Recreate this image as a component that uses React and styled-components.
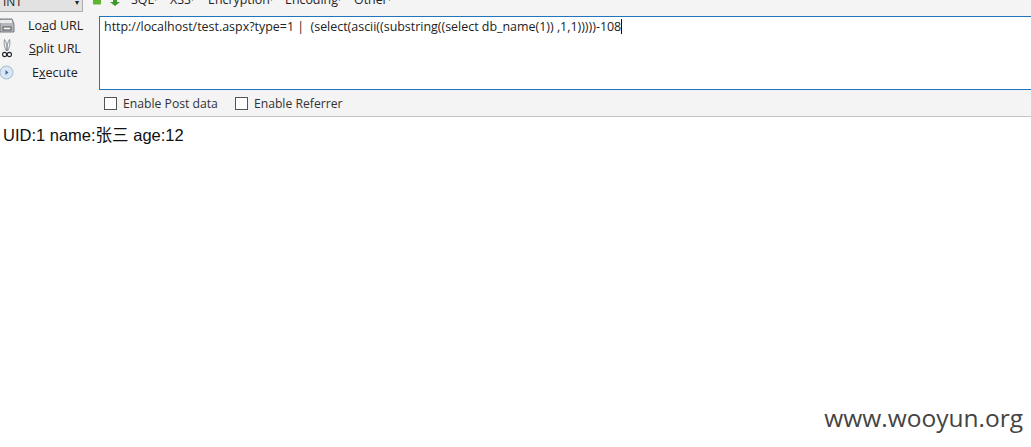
import React from 'react';
import styled, { createGlobalStyle } from 'styled-components';

const Global = createGlobalStyle`
  html, body { margin: 0; padding: 0; background: #fff; }
  body { width: 1031px; height: 447px; overflow: hidden; font-family: "Open Sans", "Noto Sans", "Noto Sans CJK SC", sans-serif; }
`;

const Page = styled.div`
  width: 1031px;
  height: 447px;
  display: flex;
  flex-direction: column;
  overflow: hidden;
  position: relative;
`;

const Bar = styled.div`
  height: 116px;
  flex: none;
  background: #f4f4f4;
  border-bottom: 1px solid #c4c4c4;
  overflow: hidden;
`;

const TopRow = styled.div`
  height: 9px;
  display: flex;
`;

const Select = styled.div`
  width: 83px;
  height: 12px;
  box-sizing: border-box;
  background: #e2e2e2;
  border-right: 1px solid #acacac;
  border-bottom: 1px solid #acacac;
  display: flex;
  justify-content: space-between;
  align-items: flex-end;
  font-size: 12px;
  line-height: 14px;
  color: #222;
  padding: 0 3px 2px 3px;
  flex: none;
`;

const Arrows = styled.div`
  display: flex;
  gap: 9px;
  margin-left: 10px;
  margin-right: 11px;
  align-items: flex-start;
`;

const Menu = styled.div`
  display: flex;
  font-size: 12.4px;
  line-height: 14px;
  color: #222;
  height: 7px;
  align-items: flex-end;
`;

const MenuItem = styled.span`
  width: ${p => p.$w}px;
  white-space: nowrap;
  &::after { content: '▾'; font-size: 6px; vertical-align: 3px; }
`;

const Body = styled.div`
  display: flex;
  margin-top: 7px;
`;

const Side = styled.div`
  width: 99px;
  flex: none;
  display: flex;
  flex-direction: column;
  margin-top: -2px;
`;

const SideItem = styled.div`
  height: 23.3px;
  display: flex;
  align-items: center;
`;

const SideIcon = styled.span`
  width: 17px;
  flex: none;
  display: flex;
  padding-left: ${p => p.$pl || 0}px;
  box-sizing: border-box;
`;

const SideLabel = styled.span`
  font-size: 12.5px;
  color: #222;
  margin-left: ${p => p.$ml}px;
  white-space: nowrap;
  u { text-underline-offset: 1px; }
`;

const Main = styled.div`
  flex: 1;
  min-width: 0;
`;

const UrlBox = styled.div`
  height: 74px;
  box-sizing: border-box;
  background: #fff;
  border: 1px solid #1f76bd;
  border-right: none;
  padding: 1px 4px;
  font-size: 12.45px;
  line-height: 17px;
  color: #222;
  white-space: pre;
`;

const Caret = styled.span`
  display: inline-block;
  width: 1px;
  height: 15px;
  background: #111;
  vertical-align: -3px;
`;

const Options = styled.div`
  display: flex;
  align-items: center;
  height: 27px;
  padding-left: 5px;
`;

const Check = styled.span`
  width: 13px;
  height: 13px;
  box-sizing: border-box;
  border: 1px solid #555;
  background: #fff;
  flex: none;
`;

const OptLabel = styled.span`
  font-size: 12.2px;
  color: #333;
  margin-left: 6px;
  margin-right: ${p => p.$mr}px;
  white-space: nowrap;
`;

const Content = styled.div`
  padding: 8px 3px;
  font-family: "Liberation Sans", "Noto Sans CJK SC", sans-serif;
  font-size: 16.5px;
  line-height: 20px;
  color: #111;
`;

const Mark = styled.div`
  position: absolute;
  right: 8px;
  bottom: 14px;
  font-family: "Open Sans", sans-serif;
  font-size: 24.5px;
  line-height: 30px;
  color: #444;
`;

const Up = () => (
  <svg width="8" height="5" viewBox="0 0 8 5"><path d="M0 0h8v3.5a1 1 0 0 1-1 1H1a1 1 0 0 1-1-1z" fill="#5cb531" /></svg>
);
const Down = () => (
  <svg width="10" height="6" viewBox="0 0 10 6"><path d="M3 0h4v2h3L5 6 0 2h3z" fill="#3d9a2c" /></svg>
);
const Disk = () => (
  <svg width="15" height="15" viewBox="0 0 15 15">
    <path d="M0 1h12l2 5v8H0z" fill="#b4b8bd" stroke="#777b80" strokeWidth="1" />
    <rect x="0" y="2" width="12" height="3" fill="#e8eaec" />
    <rect x="3" y="9" width="8" height="3" fill="#f4f4f4" stroke="#555" strokeWidth="1" />
  </svg>
);
const Scissors = () => (
  <svg width="10" height="19" viewBox="0 0 10 19" fill="none">
    <path d="M2.5 0.5C1.5 4 2.5 9 4.5 12M2.5 0.5C4.5 3 5.5 8 4.5 12" stroke="#7d8894" strokeWidth="0.9" />
    <path d="M7.5 0.5C8.5 4 7.5 9 5.5 12M7.5 0.5C5.5 3 4.5 8 5.5 12" stroke="#7d8894" strokeWidth="0.9" />
    <circle cx="2.6" cy="15.5" r="2.1" stroke="#26292d" strokeWidth="1.1" />
    <circle cx="7.4" cy="15.5" r="2.1" stroke="#26292d" strokeWidth="1.1" />
  </svg>
);
const Play = () => (
  <svg width="14" height="15" viewBox="0 0 14 15">
    <circle cx="6.5" cy="7.5" r="6.5" fill="#d9e6f3" stroke="#a6bad0" />
    <path d="M5.5 5L8.5 7.5l-3 2.5z" fill="#3c6ea5" />
  </svg>
);

export default function App() {
  return (
    <Page>
      <Global />
      <Bar>
        <TopRow>
          <Select><span>INT</span><span style={{ fontSize: 8 }}>▾</span></Select>
          <Arrows><Up /><Down /></Arrows>
          <Menu>
            <MenuItem $w={39}>SQL</MenuItem>
            <MenuItem $w={38}>XSS</MenuItem>
            <MenuItem $w={77}>Encryption</MenuItem>
            <MenuItem $w={69}>Encoding</MenuItem>
            <MenuItem $w={40}>Other</MenuItem>
          </Menu>
        </TopRow>
        <Body>
          <Side>
            <SideItem>
              <SideIcon><Disk /></SideIcon>
              <SideLabel $ml={11}>Lo<u>a</u>d URL</SideLabel>
            </SideItem>
            <SideItem>
              <SideIcon $pl={2}><Scissors /></SideIcon>
              <SideLabel $ml={12}><u>S</u>plit URL</SideLabel>
            </SideItem>
            <SideItem>
              <SideIcon><Play /></SideIcon>
              <SideLabel $ml={15}>E<u>x</u>ecute</SideLabel>
            </SideItem>
          </Side>
          <Main>
            <UrlBox>http://localhost/test.aspx?type=1 |  (select(ascii((substring((select db_name(1)) ,1,1)))))-108<Caret /></UrlBox>
            <Options>
              <Check />
              <OptLabel $mr={17}>Enable Post data</OptLabel>
              <Check />
              <OptLabel $mr={0}>Enable Referrer</OptLabel>
            </Options>
          </Main>
        </Body>
      </Bar>
      <Content>UID:1 name:张三 age:12</Content>
      <Mark>www.wooyun.org</Mark>
    </Page>
  );
}
